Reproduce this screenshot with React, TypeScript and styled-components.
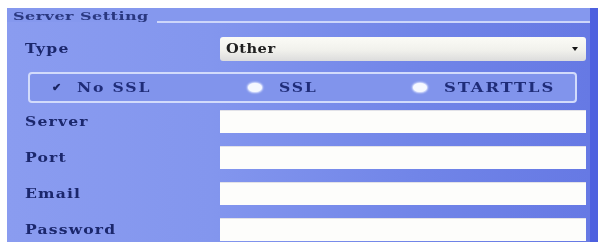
import React from "react";
import styled, { createGlobalStyle } from "styled-components";

const Global = createGlobalStyle`
  html, body { margin: 0; padding: 0; background: #ffffff; }
  body { width: 607px; height: 246px; overflow: hidden; }
`;

const Panel = styled.div`
  margin: 8px 9px 0 7px;
  width: 591px;
  height: 234px;
  box-sizing: border-box;
  background: linear-gradient(90deg, #8a9cf0 0%, #8396ee 35%, #7185e8 70%, #6679e4 100%);
  border-right: 8px solid #4d60df;
  display: flex;
  flex-direction: column;
  font-family: "DejaVu Serif", "Liberation Serif", serif;
  color: #1b276c;
  filter: blur(0.5px);
`;

const Header = styled.div`
  height: 14px;
  display: flex;
  align-items: flex-end;
  background: #8598ee;
`;

const Wide = styled.span<{ $sx: number }>`
  display: inline-block;
  transform: scaleX(${(p) => p.$sx});
  transform-origin: left center;
  white-space: nowrap;
`;

const Legend = styled.span`
  width: 144px;
  font-size: 11.5px;
  font-weight: bold;
  letter-spacing: 0.3px;
  line-height: 12px;
  padding: 0 0 0 6px;
  color: #2a3880;
`;

const HeaderLine = styled.div`
  flex: 1;
  height: 2px;
  background: #cdd6fa;
  margin-bottom: -1px;
`;

const Row = styled.div<{ $top: number; $h: number }>`
  display: grid;
  grid-template-columns: 213px 366px;
  align-items: center;
  margin-top: ${(p) => p.$top}px;
  height: ${(p) => p.$h}px;
`;

const Label = styled.span`
  padding-left: 18px;
  font-size: 12px;
  font-weight: bold;
  letter-spacing: 0.9px;
`;

const Select = styled.div`
  height: 100%;
  box-sizing: border-box;
  border-radius: 3px;
  background: linear-gradient(180deg, #fbfbf6 0%, #f1f1ec 55%, #dcdcdc 100%);
  display: flex;
  align-items: center;
  justify-content: space-between;
  padding: 0 8px 0 6px;
  font-size: 12px;
  font-weight: bold;
  letter-spacing: 0.4px;
  color: #202020;
`;

const Arrow = styled.span`
  width: 0;
  height: 0;
  border-left: 3.5px solid transparent;
  border-right: 3.5px solid transparent;
  border-top: 4px solid #151515;
`;

const RadioBox = styled.div`
  margin: 11px 13px 0 21px;
  height: 31px;
  box-sizing: border-box;
  border: 2px solid #d2dbfb;
  border-radius: 4px;
  display: grid;
  grid-template-columns: 196px 165px 1fr;
  align-items: center;
  padding-left: 22px;
  background: #8194ec;
`;

const Option = styled.div`
  display: flex;
  align-items: center;
  font-size: 12px;
  font-weight: bold;
  letter-spacing: 1.4px;
  color: #1f2c78;
`;

const Check = styled.span`
  width: 14px;
  margin-right: 11px;
  font-size: 11px;
  color: #1a2460;
`;

const Dot = styled.span`
  width: 14px;
  height: 9px;
  border-radius: 50%;
  background: #f6f8ff;
  box-shadow: 0 0 2px 1px #e4eaff;
  margin-right: 17px;
`;

const Input = styled.div`
  height: 100%;
  background: #fdfdfb;
  border-top: 1px solid #e2e2e8;
  box-sizing: border-box;
`;

const fields = ["Server", "Port", "Email", "Password"];

export default function App() {
  return (
    <>
      <Global />
      <Panel>
        <Header>
          <Legend>
            <Wide $sx={1.4}>Server Setting</Wide>
          </Legend>
          <HeaderLine />
        </Header>
        <Row $top={15} $h={24}>
          <Label>
            <Wide $sx={1.3}>Type</Wide>
          </Label>
          <Select>
            <Wide $sx={1.22}>Other</Wide>
            <Arrow />
          </Select>
        </Row>
        <RadioBox>
          <Option>
            <Check>✔</Check>
            <Wide $sx={1.3}>No SSL</Wide>
          </Option>
          <Option>
            <Dot />
            <Wide $sx={1.3}>SSL</Wide>
          </Option>
          <Option>
            <Dot />
            <Wide $sx={1.36}>STARTTLS</Wide>
          </Option>
        </RadioBox>
        {fields.map((f, i) => (
          <Row key={f} $top={i === 0 ? 7 : 13} $h={23}>
            <Label>
              <Wide $sx={1.3}>{f}</Wide>
            </Label>
            <Input />
          </Row>
        ))}
      </Panel>
    </>
  );
}
